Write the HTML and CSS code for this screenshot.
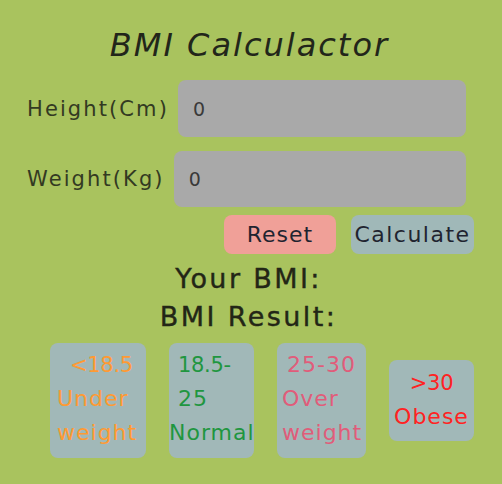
FILE: index.html
```html
<!DOCTYPE html>
<html>
<head>
<meta charset="utf-8">
<link rel="stylesheet" href="styles.css">
</head>
<body>
<div class="app">
  <h1 class="title">BMI Calculactor</h1>
  <div class="row row-h">
    <label class="label">Height(Cm)</label>
    <div class="input">0</div>
  </div>
  <div class="row row-w">
    <label class="label">Weight(Kg)</label>
    <div class="input">0</div>
  </div>
  <div class="buttons">
    <button class="btn reset">Reset</button>
    <button class="btn calc">Calculate</button>
  </div>
  <div class="result">
    <div class="result-line">Your BMI:</div>
    <div class="result-line">BMI Result:</div>
  </div>
  <div class="cards">
    <div class="card c1">
      <span class="ln l1 num">&lt;18.5</span>
      <span class="ln">Under</span>
      <span class="ln">weight</span>
    </div>
    <div class="card c2">
      <span class="ln l1 num">18.5-</span>
      <span class="ln l1">25</span>
      <span class="ln">Normal</span>
    </div>
    <div class="card c3">
      <span class="ln l1">25-30</span>
      <span class="ln">Over</span>
      <span class="ln">weight</span>
    </div>
    <div class="card c4">
      <span class="ln num">&gt;30</span>
      <span class="ln">Obese</span>
    </div>
  </div>
</div>
</body>
</html>
```

FILE: styles.css
```css
html, body {
  margin: 0;
  padding: 0;
  background: #a9c35e;
}
body {
  width: 502px;
  height: 484px;
  font-family: "DejaVu Sans", sans-serif;
  color: #262a1a;
}
.app {
  display: flex;
  flex-direction: column;
  padding: 25px 28px 0 27px;
}
.title {
  margin: 0 0 15px 0;
  font-size: 32px;
  letter-spacing: 2px;
  font-style: italic;
  font-weight: normal;
  text-align: center;
  line-height: 40px;
  padding-right: 2px;
  color: #22261a;
}
.row {
  display: flex;
  align-items: center;
  gap: 9px;
  margin-right: 8px;
}
.row-w {
  margin-top: 14px;
}
.label {
  font-size: 21px;
  letter-spacing: 2.1px;
  color: #333a22;
}
.input {
  flex: 1;
  height: 57px;
  background: #a9a9a9;
  border-radius: 8px;
  display: flex;
  align-items: center;
  padding-left: 15px;
  font-size: 19px;
  color: #3a3a3a;
}
.row-w .input { height: 56px; }
.buttons {
  display: flex;
  justify-content: flex-end;
  gap: 15px;
  margin-top: 8px;
}
.btn {
  height: 39px;
  border: none;
  border-radius: 8px;
  font-family: "DejaVu Sans", sans-serif;
  font-size: 22px;
  color: #1f2430;
  padding: 0;
}
.reset {
  width: 112px;
  background: #f0a098;
  letter-spacing: 1px;
}
.calc {
  width: 123px;
  background: #a0b8b8;
  letter-spacing: 1.5px;
}
.result {
  display: flex;
  flex-direction: column;
  align-items: center;
  margin-top: 6px;
  padding-right: 4px;
}
.result-line {
  font-size: 27px;
  letter-spacing: 2.4px;
  line-height: 38px;
  color: #232616;
  -webkit-text-stroke: 0.4px #232616;
}
.cards {
  display: flex;
  align-items: center;
  gap: 23px;
  margin-top: 7px;
  padding-left: 23px;
}
.card {
  background: #a1b8b8;
  border-radius: 8px;
  display: flex;
  flex-direction: column;
  font-size: 22px;
  letter-spacing: 1px;
  line-height: 34px;
  padding: 5px 0 8px 0;
  box-sizing: border-box;
  height: 115px;
}
.ln { display: block; white-space: nowrap; }
.num { font-size: 21px; letter-spacing: -0.3px; }
.c1 { width: 96px; color: #ff9a33; padding-left: 7px; }
.c1 .l1 { padding-left: 13px; }
.c2 { width: 85px; color: #1f9640; }
.c2 .l1 { padding-left: 9px; }
.c3 { width: 89px; color: #e05c7a; padding-left: 5px; }
.c3 .l1 { padding-left: 5px; }
.c4 { width: 85px; height: 81px; color: #ff2222; text-align: center; padding: 6px 0 7px 0; }
```
